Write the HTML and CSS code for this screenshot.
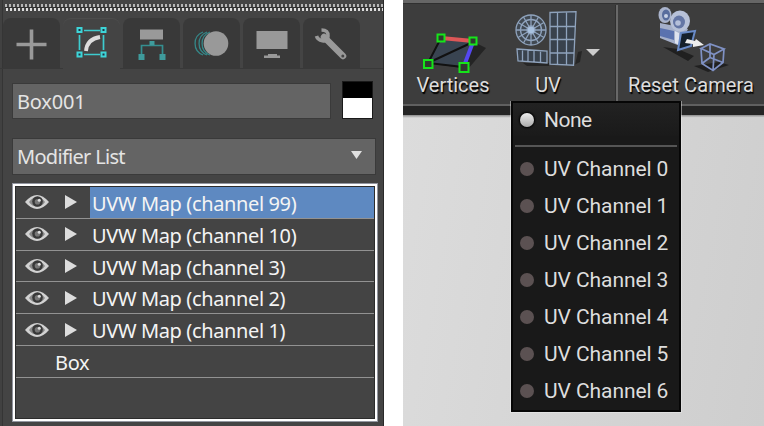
FILE: index.html
```
<!DOCTYPE html>
<html lang="en">
<head>
<meta charset="utf-8">
<title>UV channels</title>
<link rel="stylesheet" href="styles.css">
</head>
<body>
<svg class="defs" width="0" height="0">
  <defs>
    <symbol id="eye" viewBox="0 0 26 16">
      <path d="M1 8Q7 1 13 1T25 8Q19 15 13 15T1 8Z" fill="#d2d2d2"/>
      <path d="M5 8Q8 3.500 13 3.300Q18 3.500 21 8Q18 12.500 13 12.700Q8 12.500 5 8Z" fill="#888"/>
      <circle cx="13.500" cy="7.500" r="5.300" fill="#383838"/>
      <circle cx="13.500" cy="7.800" r="2.800" fill="#777"/>
      <circle cx="15.300" cy="6.300" r="1.500" fill="#ddd"/>
    </symbol>
  </defs>
</svg>
<main class="screen">
  <section class="panel">
    <div class="grip"></div>
    <nav class="tabs">
      <div class="tab"><svg width="57" height="50"><path d="M13.500 26.500h30M28.500 11.500v30" stroke="#999" stroke-width="3.600"/></svg></div>
      <div class="tab active"><svg width="57" height="50" fill="none">
        <path d="M21 12.500h16M21 36.500h16M16.500 17v15M40.500 17v15" stroke="#3dcccf" stroke-width="1.700"/>
        <path d="M23 33Q24 21 37 19" stroke="#ddd" stroke-width="3.800"/>
        <path d="M14.500 10h4v4h-4zM38.500 10h4v4h-4zM14.500 34.500h4v4h-4zM38.500 34.500h4v4h-4z" fill="#234" stroke="#3dd5d8" stroke-width="2"/></svg></div>
      <div class="tab"><svg width="57" height="50">
        <path d="M17 11.500h23v10H17z" fill="#999"/>
        <path d="M18.500 37v-9.500h21V37M29 23v4" fill="none" stroke="#358f90" stroke-width="1.700"/>
        <path d="M26.500 23h5v4h-5zM15.500 36h6v6h-6zM36.500 36h6v6h-6z" fill="#3f9b9c"/></svg></div>
      <div class="tab"><svg width="57" height="50" fill="none" stroke="#358889" stroke-width="1.300">
        <path d="M20 14A12.300 12.300 0 0 0 20 37M24 14A12.300 12.300 0 0 0 24 37M27 14A12.300 12.300 0 0 0 27 37"/>
        <circle cx="33" cy="25.500" r="12.300" fill="#999" stroke="none"/></svg></div>
      <div class="tab"><svg width="57" height="50" fill="#999"><path d="M13.500 13h31v18h-31zM25 36h9v1.500h3V40H21v-2.500h4z"/></svg></div>
      <div class="tab"><svg width="57" height="50" fill="none">
        <path d="M21 19L40 38" stroke="#999" stroke-width="6.500" stroke-linecap="round"/>
        <path d="M18.500 12Q25.500 12 25 18T19.500 22.800T13.500 18" stroke="#999" stroke-width="3.600"/>
        <circle cx="39.800" cy="38" r="1.500" fill="#444"/></svg></div>
    </nav>
    <div class="namerow"><div class="field name"><span class="t-name">Box001</span></div><div class="swatch"></div></div>
    <div class="field dropdown"><span class="t-mod">Modifier List</span><svg width="11" height="8"><path d="M0 0h11L5.500 8z" fill="#e0e0e0"/></svg></div>
    <div class="stack">
      <div class="row selected"><svg class="eye"><use href="#eye"/></svg><i class="arrow"></i><span class="label"><b>UVW Map (channel 99)</b></span></div>
      <div class="row"><svg class="eye"><use href="#eye"/></svg><i class="arrow"></i><span class="label"><b>UVW Map (channel 10)</b></span></div>
      <div class="row"><svg class="eye"><use href="#eye"/></svg><i class="arrow"></i><span class="label"><b>UVW Map (channel 3)</b></span></div>
      <div class="row"><svg class="eye"><use href="#eye"/></svg><i class="arrow"></i><span class="label"><b>UVW Map (channel 2)</b></span></div>
      <div class="row"><svg class="eye"><use href="#eye"/></svg><i class="arrow"></i><span class="label"><b>UVW Map (channel 1)</b></span></div>
      <div class="row base"><b>Box</b></div>
    </div>
  </section>
  <section class="viewer">
    <div class="toolbar">
      <div class="tool vertices"><svg width="100" height="70">
        <path d="M25 63L65 69L83 48L75 44Z" fill="#242424"/>
        <path d="M38 38L70 42L60 67L25 63Z" fill="#394451"/>
        <path d="M38 38L25 63L60 67M25 63L70 42" fill="none" stroke="#111" stroke-width="2"/>
        <path d="M38 38L70 41" stroke="#dd5757" stroke-width="4"/><path d="M70 42L61 66" stroke="#5548f0" stroke-width="4"/>
        <path d="M34.500 34.500h7v7h-7zM66.500 37.500h7v7h-7zM21 60h8.500v8h-8.500zM56.500 63h9v9h-9z" fill="#303a30" stroke="#16e51a" stroke-width="2"/></svg><span>Vertices</span></div>
      <div class="tool uv"><svg width="90" height="70" fill="none" stroke="#8fa3bd" stroke-width="1.300">
        <path d="M58 66l14-1 3-13 4-1-2 11-8 4zM20 63h26v3H24z" fill="#262626" stroke="none"/>
        <circle cx="28" cy="30" r="15" fill="#414952"/><circle cx="28" cy="30" r="10.500"/>
        <path d="M13 30h30M28 15v30M15 22.500l26 15M15 37.500l26-15M20.500 17l15 26M20.500 43l15-26"/>
        <circle cx="28" cy="30" r="4" fill="#a8c1df"/>
        <path d="M14 49l30 2v12l-29-2zM19.500 49.500v12M25 50v12M31 50.500v12M37.500 51v12" fill="#39424d"/>
        <path d="M47 12.500l26-.8-2.500 53.500-23.500-1zM54.500 12.500v52M63.500 12v53M47 26.500h25M47 39.500h24.500M47 53h24" fill="#39424d"/></svg><span>UV</span></div>
      <div class="caret"><svg width="14" height="8"><path d="M0 0h14L7 7z" fill="#ccc"/></svg></div>
      <div class="divider"></div>
      <div class="tool camera"><svg width="130" height="76">
        <path d="M45 47l15 2 16 7-6 5zM76 66l14 6 21-7-10-3z" fill="#202020"/>
        <path d="M42 23l10 2 18 4-8 17-20-8z" fill="#a5b0ca"/>
        <path d="M42 28l14 3v9l-14-4z" fill="#5a72af"/>
        <path d="M57 31l4 2v12l-4-2z" fill="#dde2ee"/>
        <ellipse cx="47" cy="15" rx="6.500" ry="8" fill="#aab4cc"/><ellipse cx="48" cy="15" rx="4" ry="5.500" fill="#596d9d"/><circle cx="48" cy="16" r="2" fill="#c9d2e6"/>
        <ellipse cx="62" cy="21" rx="10" ry="10.500" fill="#b7c1d8"/><ellipse cx="61" cy="22" rx="6" ry="6.500" fill="#6476a5"/><circle cx="60" cy="23" r="2.800" fill="#b5c0da"/>
        <path d="M63 33l14-2-4 15-13 4z" fill="#15202c" stroke="#698bc8" stroke-width="2"/>
        <path d="M69 39l8 2 1-2 8 6-11 2v-3l-8-1z" fill="#eee"/>
        <path d="M83 48.500l9-4.500 14 5-10 5.500zM83 48.500l1 15 11 7 10-8 1-13.500M96 54.500l-1 16M92 44v13.500l-8 6M92 57.500l13 5" fill="none" stroke="#7f91c4" stroke-width="1.700"/></svg><span>Reset Camera</span></div>
    </div>
    <div class="viewport"></div>
    <div class="menu">
      <div class="item none"><i class="dot on"></i><span>None</span></div>
      <hr>
      <div class="item"><i class="dot"></i><span>UV Channel 0</span></div>
      <div class="item"><i class="dot"></i><span>UV Channel 1</span></div>
      <div class="item"><i class="dot"></i><span>UV Channel 2</span></div>
      <div class="item"><i class="dot"></i><span>UV Channel 3</span></div>
      <div class="item"><i class="dot"></i><span>UV Channel 4</span></div>
      <div class="item"><i class="dot"></i><span>UV Channel 5</span></div>
      <div class="item"><i class="dot"></i><span>UV Channel 6</span></div>
    </div>
  </section>
</main>
</body>
</html>
```
FILE: styles.css
```
* { box-sizing: border-box; }
body { margin: 0; background: #fff; overflow: hidden; }
svg { display: block; }
.defs { position: absolute; }
.screen { display: flex; gap: 19px; width: 764px; height: 426px; }
b { font-weight: 400; }

.panel { width: 384px; height: 426px; background: #444; border-right: 1px solid #292929; padding-top: 4px; font-family: "Noto Sans", sans-serif; font-size: 20px; letter-spacing: -0.370px; color: #f4f4f4; box-shadow: inset 2px 0 #414141, inset 3px 0 #353535; overflow: hidden; }
.grip { height: 7px; margin-left: 5px; background: repeating-linear-gradient(90deg, #b5b5b5 0 2px, #444 2px 4px) 0 0 / 100% 3px no-repeat, repeating-linear-gradient(90deg, #444 0 1px, #ddd 1px 3px, #444 3px 4px) 0 4px / 100% 3px no-repeat, #303030; }
.tabs { display: flex; gap: 3px; height: 58px; padding: 7px 0 0 3px; border-bottom: 1px solid #393939; }
.tab { width: 57px; height: 50px; background: #393939; border-radius: 8px 8px 0 0; }
.tab.active { height: 51px; background: #444; box-shadow: inset 0 1px #4c4c4c; }
.namerow { display: flex; gap: 11px; padding: 14px 0 0 12px; height: 69px; }
.field { background: #646464; border: 1px solid #3a3a3a; color: #e4e4e4; }
.name { width: 319px; height: 36px; padding-left: 4px; line-height: 35px; letter-spacing: -0.200px; }
.swatch { width: 31px; height: 38px; margin-top: -2px; border: 1px solid #1a1a1a; background: linear-gradient(#000 0 16px, #fff 16px); }
.dropdown { display: flex; align-items: center; justify-content: space-between; width: 364px; height: 37px; margin-left: 12px; padding: 0 13px 0 4px; letter-spacing: -0.700px; }
.dropdown svg { margin-top: -4px; }
.stack { width: 366px; height: 239px; margin: 8px 0 0 12px; border: 1px solid #9396a0; padding: 3px; box-shadow: inset 0 0 0 2px #fff, inset 0 0 0 3px #2c2c2c; }
.row { display: flex; align-items: center; height: 31.800px; border-bottom: 1px solid #929292; }
.eye { width: 26px; height: 16px; margin-left: 8px; }
.arrow { width: 0; height: 0; margin-left: 15px; border-left: 12px solid #ddd; border-top: 7px solid transparent; border-bottom: 7px solid transparent; }
.label { flex: 1; margin-left: 13px; height: 100%; padding: 1px 0 0 2px; line-height: 32px; white-space: nowrap; }
.selected .label { background: #5e89c1; }
.base { padding: 2px 0 0 39px; }

.viewer { position: relative; width: 361px; height: 426px; background: #d5d5d5; font-family: Roboto, sans-serif; font-size: 20px; color: #ddd; }
.toolbar { display: flex; height: 106px; background: #3d3d3d; border-bottom: 2px solid #606060; box-shadow: inset 0 3px #666, inset 0 4px #303030; }
.tool { display: flex; flex-direction: column; align-items: center; flex: none; }
.tool svg { height: 74px; overflow: visible; }
.tool span { line-height: 23px; white-space: nowrap; text-shadow: 1px 2px 1px #000; }
.vertices { width: 100px; }
.uv { width: 90px; }
.caret { width: 22px; padding: 49px 0 0 0; margin-left: -7px; }
.divider { width: 3px; height: 97px; margin: 5px 0 0 7px; background: #686868; border-left: 1px solid #303030; }
.camera { width: 146px; }
.camera span { letter-spacing: 0.120px; }
.camera svg { margin-left: -16px; }
.viewport { height: 320px; border-top: 9px solid #252525; background: linear-gradient(#8a8a8a, #ddd 3px, transparent 3px), linear-gradient(100deg, #dcdcdc, #cecece); }
.menu { position: absolute; left: 108px; top: 101px; width: 170px; height: 311px; background: #191919; border: 2px solid #060606; box-shadow: 0 0 0 1px #eee7; clip-path: inset(0 -1px -1px -1px); }
.menu hr { height: 2px; margin: 9px 2px 3px; border: 0; background: #555; }
.item { display: flex; align-items: center; height: 37.100px; padding-left: 7px; white-space: nowrap; }
.item.none { height: 33px; background: linear-gradient(#222, #1a1a1a); }
.item span { margin-left: 10px; font-size: 21px; letter-spacing: -0.080px; }
.item.none span { letter-spacing: -0.500px; }
.dot { width: 14px; height: 14px; border-radius: 50%; background: #5b5152; }
.dot.on { background: linear-gradient(#eee, #aaa); box-shadow: 0 0 2px 1px #000; }
```
